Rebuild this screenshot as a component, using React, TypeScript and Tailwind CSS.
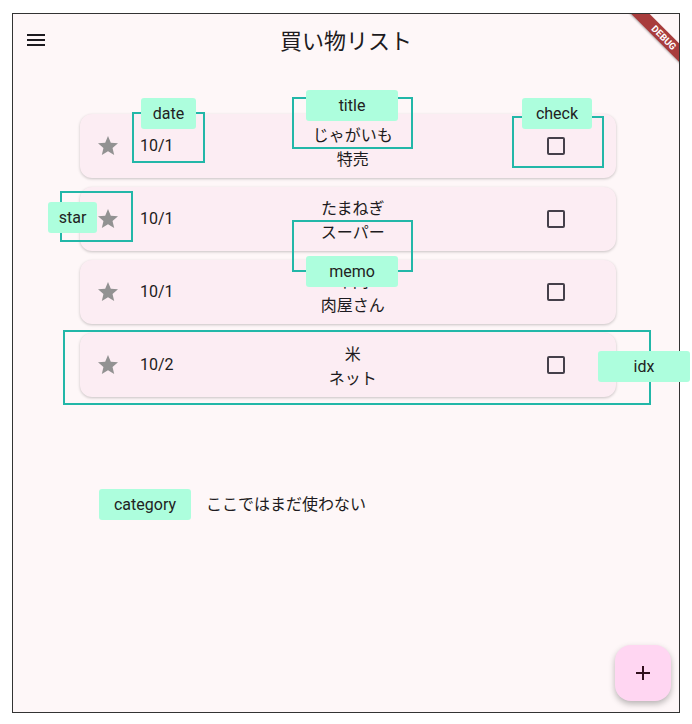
import React from 'react';

type Item = { date: string; title: string; memo: string };

const items: Item[] = [
  { date: '10/1', title: 'じゃがいも', memo: '特売' },
  { date: '10/1', title: 'たまねぎ', memo: 'スーパー' },
  { date: '10/1', title: '牛肉', memo: '肉屋さん' },
  { date: '10/2', title: '米', memo: 'ネット' },
];

const font = { fontFamily: 'Roboto, "Noto Sans CJK JP", sans-serif' };

const StarIcon = () => (
  <svg width="24" height="24" viewBox="0 0 24 24" className="shrink-0">
    <path fill="#929292" d="M12 17.27L18.18 21l-1.64-7.03L22 9.24l-7.19-.61L12 2 9.19 8.63 2 9.24l5.46 4.73L5.82 21z" />
  </svg>
);

const MenuIcon = () => (
  <svg width="24" height="24" viewBox="0 0 24 24">
    <path fill="#1d1b20" d="M3 18h18v-2H3v2zm0-5h18v-2H3v2zm0-7v2h18V6H3z" />
  </svg>
);

// annotation overlays (outline boxes + labels), page coordinates
const boxes = [
  { l: 132, t: 112, w: 73, h: 51 },
  { l: 292, t: 97, w: 121, h: 52 },
  { l: 512, t: 116, w: 92, h: 52 },
  { l: 60, t: 191, w: 73, h: 51 },
  { l: 292, t: 220, w: 121, h: 52 },
  { l: 63, t: 330, w: 588, h: 75 },
];

const labels = [
  { text: 'date', l: 141, t: 98, w: 55 },
  { text: 'title', l: 306, t: 90, w: 92 },
  { text: 'check', l: 522, t: 98, w: 70 },
  { text: 'star', l: 48, t: 202, w: 49 },
  { text: 'memo', l: 306, t: 256, w: 92 },
  { text: 'idx', l: 598, t: 351, w: 92 },
];

function ItemCard({ item }: { item: Item }) {
  return (
    <div className="h-[64px] w-[536px] rounded-[12px] bg-[#fcedf3] shadow-[0_1px_3px_rgba(0,0,0,0.22)] flex items-center pl-[16px] pr-[36px]">
      <StarIcon />
      <span className="ml-[20px] text-[16px] leading-[24px] text-[#1d1b20]">{item.date}</span>
      <div className="flex-1 flex flex-col items-center mt-[3px] text-[16px] leading-[24px] text-[#1d1b20]">
        <span>{item.title}</span>
        <span>{item.memo}</span>
      </div>
      <div className="w-[48px] flex justify-center">
        <div className="w-[18px] h-[18px] border-2 border-[#45404a] rounded-[2px]" />
      </div>
    </div>
  );
}

export default function App() {
  return (
    <div className="relative w-[692px] h-[724px] bg-white pt-[13px] pl-[12px]" style={font}>
      <div className="relative w-[668px] h-[700px] border border-[#333333] bg-[#fef7f8] overflow-hidden flex flex-col">
        {/* App bar */}
        <div className="h-[56px] grid grid-cols-[56px_1fr_56px] items-center shrink-0">
          <div className="pl-[11px] -mt-[4px]">
            <MenuIcon />
          </div>
          <div className="text-center text-[22px] text-[#1d1b20] leading-[28px]">買い物リスト</div>
          <div />
        </div>

        {/* List */}
        <div className="mt-[44px] pl-[67px] flex flex-col gap-[9px]">
          {items.map((it, i) => (
            <ItemCard key={i} item={it} />
          ))}
        </div>

        {/* Category row */}
        <div className="mt-[92px] pl-[86px] flex items-center gap-[15px]">
          <div className="w-[92px] h-[31px] rounded-[3px] bg-[#adfedd] flex items-center justify-center text-[16px] text-[#222]">
            category
          </div>
          <span className="text-[16px] text-[#1d1b20]">ここではまだ使わない</span>
        </div>

        {/* FAB */}
        <button className="absolute right-[8px] bottom-[11px] w-[56px] h-[56px] rounded-[16px] bg-[#ffd6f2] shadow-[0_3px_6px_rgba(0,0,0,0.28)] flex items-center justify-center">
          <svg width="24" height="24" viewBox="0 0 24 24">
            <path fill="#31101d" d="M19 13h-6v6h-2v-6H5v-2h6V5h2v6h6v2z" />
          </svg>
        </button>

        {/* DEBUG banner */}
        <div className="absolute left-[601px] top-[17px] w-[100px] h-[13px] rotate-45 bg-[#a83c3c] shadow-[0_1px_2px_rgba(0,0,0,0.3)] flex items-center justify-center">
          <span className="text-[9.5px] font-bold leading-none text-white">DEBUG</span>
        </div>
      </div>

      {/* annotation overlays */}
      {boxes.map((b, i) => (
        <div
          key={i}
          className="absolute border-2 border-[#22b7a8] pointer-events-none"
          style={{ left: b.l, top: b.t, width: b.w, height: b.h }}
        />
      ))}
      {labels.map((lb) => (
        <div
          key={lb.text}
          className="absolute h-[31px] rounded-[3px] bg-[#adfedd] flex items-center justify-center text-[16px] text-[#222]"
          style={{ left: lb.l, top: lb.t, width: lb.w }}
        >
          {lb.text}
        </div>
      ))}
    </div>
  );
}
